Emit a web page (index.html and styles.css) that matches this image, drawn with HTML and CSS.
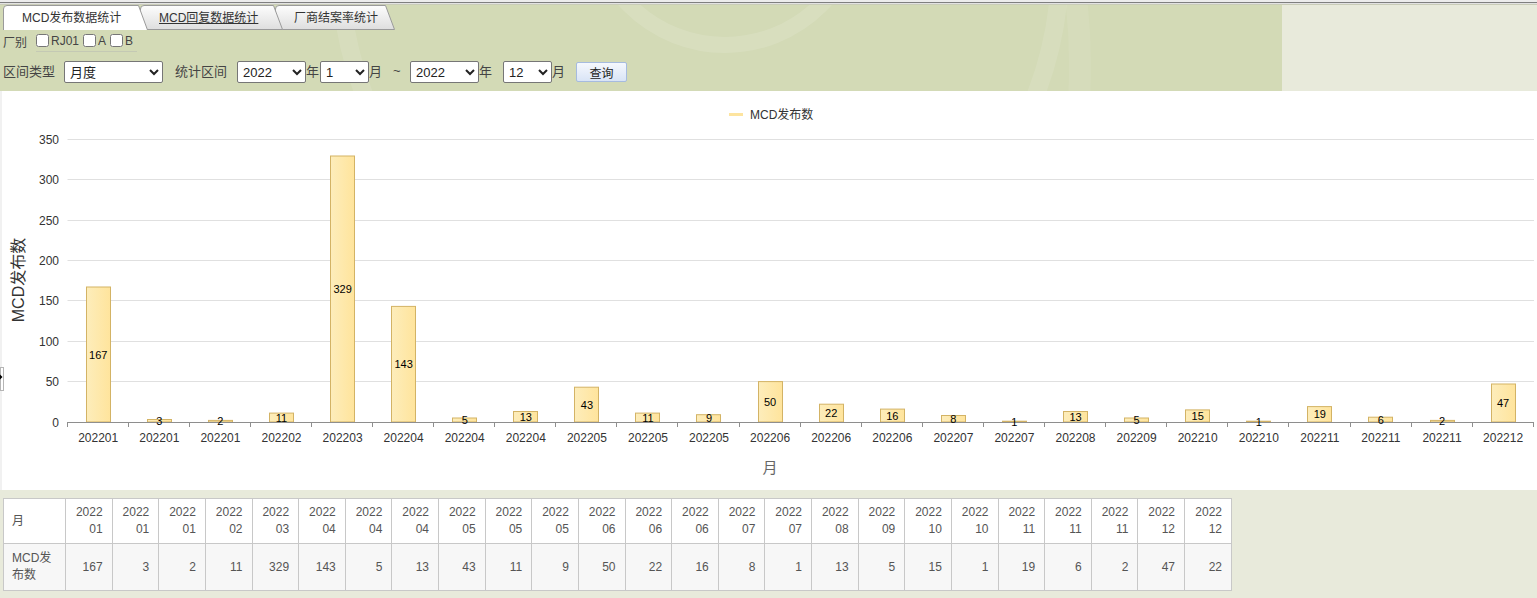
FILE: index.html
```html
<!DOCTYPE html>
<html lang="zh-CN">
<head>
<meta charset="utf-8">
<title>MCD发布数据统计</title>
<link rel="stylesheet" href="styles.css">
</head>
<body>
<div class="topbar"></div>
<div class="header">
  <svg class="deco" width="1282" height="86" viewBox="0 0 1282 86">
    <circle cx="725" cy="-95" r="135" fill="none" stroke="#ffffff" stroke-opacity="0.12" stroke-width="16"/>
    <circle cx="700" cy="-40" r="360" fill="none" stroke="#ffffff" stroke-opacity="0.1" stroke-width="18"/>
    <circle cx="520" cy="60" r="560" fill="none" stroke="#ffffff" stroke-opacity="0.07" stroke-width="22"/>
  </svg>
  <div class="tabs">
    <div class="tab tab-active">
      <svg class="tab-bg" width="145" height="25" viewBox="0 0 145 25"><path d="M0.5 25V4Q0.5 0.5 4 0.5H135.5L144.5 25" fill="#fff" stroke="#9a9a9a"/></svg>
      <span class="tab-text">MCD发布数据统计</span>
    </div>
    <div class="tab tab-2">
      <svg class="tab-bg" width="143" height="25" viewBox="0 0 143 25"><defs><linearGradient id="tg" x1="0" y1="0" x2="0" y2="1"><stop offset="0" stop-color="#fdfdfd"/><stop offset="1" stop-color="#dedede"/></linearGradient></defs><path d="M0.5 24.5V4Q0.5 0.5 4 0.5H133.5L142.5 24.5Z" fill="url(#tg)" stroke="#9a9a9a"/></svg>
      <span class="tab-text link">MCD回复数据统计</span>
    </div>
    <div class="tab tab-3">
      <svg class="tab-bg" width="120" height="25" viewBox="0 0 120 25"><path d="M0.5 24.5V4Q0.5 0.5 4 0.5H110.5L119.5 24.5Z" fill="url(#tg)" stroke="#9a9a9a"/></svg>
      <span class="tab-text">厂商结案率统计</span>
    </div>
  </div>
  <div class="row1">
    <span class="lbl-sm">厂别</span>
    <span class="checks">
      <label class="chk"><input type="checkbox">RJ01</label>
      <label class="chk"><input type="checkbox">A</label>
      <label class="chk"><input type="checkbox">B</label>
    </span>
  </div>
  <div class="row2">
    <span class="lbl">区间类型</span>
    <select class="sel sel-type"><option>月度</option></select>
    <span class="lbl lbl-range">统计区间</span>
    <select class="sel sel-year"><option>2022</option></select>
    <span class="unit">年</span>
    <select class="sel sel-mon"><option>1</option></select>
    <span class="unit">月</span>
    <span class="tilde">~</span>
    <select class="sel sel-year"><option>2022</option></select>
    <span class="unit unit-wide">年</span>
    <select class="sel sel-mon"><option>12</option></select>
    <span class="unit unit-wide">月</span>
    <button class="btn">查询</button>
  </div>
</div>

<div class="chart">
  <svg width="1537" height="399" viewBox="0 91 1537 399" font-family="'Liberation Sans','Noto Sans CJK SC',sans-serif">
    <defs>
      <linearGradient id="bar" x1="0" y1="0" x2="1" y2="0">
        <stop offset="0" stop-color="#fdedbb"/>
        <stop offset="1" stop-color="#ffe49c"/>
      </linearGradient>
    </defs>
    <rect x="0" y="91" width="2" height="399" fill="#f1f1f1"/>
    <rect x="0.5" y="367.5" width="3" height="23" fill="#fff" stroke="#b5b5b5"/>
    <path d="M0 374.5L2.5 377L0 379.5Z" fill="#000"/>

    <!-- legend -->
    <line x1="729" y1="114.5" x2="743" y2="114.5" stroke="#fde49f" stroke-width="3"/>
    <text x="750" y="118.5" font-size="12" fill="#333">MCD发布数</text>

    <!-- grid -->
    <g stroke="#e0e0e0" stroke-width="1">
      <line x1="67.5" y1="139.5" x2="1534" y2="139.5"/>
      <line x1="67.5" y1="179.5" x2="1534" y2="179.5"/>
      <line x1="67.5" y1="220.5" x2="1534" y2="220.5"/>
      <line x1="67.5" y1="260.5" x2="1534" y2="260.5"/>
      <line x1="67.5" y1="300.5" x2="1534" y2="300.5"/>
      <line x1="67.5" y1="341.5" x2="1534" y2="341.5"/>
      <line x1="67.5" y1="381.5" x2="1534" y2="381.5"/>
    </g>

    <!-- y labels -->
    <g font-size="12" fill="#333" text-anchor="end">
      <text x="59" y="143.5">350</text>
      <text x="59" y="183.5">300</text>
      <text x="59" y="224.5">250</text>
      <text x="59" y="264.5">200</text>
      <text x="59" y="304.5">150</text>
      <text x="59" y="345.5">100</text>
      <text x="59" y="385.5">50</text>
      <text x="59" y="426.5">0</text>
    </g>
    <text transform="translate(24 280) rotate(-90)" text-anchor="middle" font-size="16" fill="#333">MCD发布数</text>

    <!-- bars -->
    <g fill="url(#bar)" stroke="#d3b365" stroke-width="1">
      <rect x="86.5" y="287" width="24" height="135"/>
      <rect x="147.5" y="419.5" width="24" height="2.5"/>
      <rect x="208.5" y="420.4" width="24" height="1.6"/>
      <rect x="269.5" y="413.1" width="24" height="8.9"/>
      <rect x="330.5" y="156" width="24" height="266"/>
      <rect x="391.5" y="306.4" width="24" height="115.6"/>
      <rect x="452.5" y="418" width="24" height="4"/>
      <rect x="513.5" y="411.5" width="24" height="10.5"/>
      <rect x="574.5" y="387.2" width="24" height="34.8"/>
      <rect x="635.5" y="413.1" width="24" height="8.9"/>
      <rect x="696.5" y="414.7" width="24" height="7.3"/>
      <rect x="758.5" y="381.6" width="24" height="40.4"/>
      <rect x="819.5" y="404.2" width="24" height="17.8"/>
      <rect x="880.5" y="409.1" width="24" height="12.9"/>
      <rect x="941.5" y="415.5" width="24" height="6.5"/>
      <rect x="1002.5" y="421.2" width="24" height="0.8"/>
      <rect x="1063.5" y="411.5" width="24" height="10.5"/>
      <rect x="1124.5" y="418" width="24" height="4"/>
      <rect x="1185.5" y="409.9" width="24" height="12.1"/>
      <rect x="1246.5" y="421.2" width="24" height="0.8"/>
      <rect x="1307.5" y="406.6" width="24" height="15.4"/>
      <rect x="1368.5" y="417.2" width="24" height="4.8"/>
      <rect x="1430.5" y="420.4" width="24" height="1.6"/>
      <rect x="1491.5" y="384" width="24" height="38"/>
    </g>

    <!-- axis -->
    <line x1="67" y1="422.5" x2="1534" y2="422.5" stroke="#8e8e8e" stroke-width="1"/>
    <path stroke="#8e8e8e" stroke-width="1" d="M67.5 422v5M128.5 422v5M189.5 422v5M250.5 422v5M311.5 422v5M372.5 422v5M433.5 422v5M494.5 422v5M555.5 422v5M616.5 422v5M677.5 422v5M739.5 422v5M800.5 422v5M861.5 422v5M922.5 422v5M983.5 422v5M1044.5 422v5M1105.5 422v5M1166.5 422v5M1227.5 422v5M1288.5 422v5M1350.5 422v5M1411.5 422v5M1472.5 422v5M1533.5 422v5"/>

    <!-- bar labels -->
    <g font-size="11" fill="#000" text-anchor="middle" dominant-baseline="central">
      <text x="98.2" y="354.5">167</text>
      <text x="159.3" y="420.8">3</text>
      <text x="220.4" y="421.2">2</text>
      <text x="281.5" y="417.6">11</text>
      <text x="342.6" y="289">329</text>
      <text x="403.6" y="364.2">143</text>
      <text x="464.7" y="420">5</text>
      <text x="525.8" y="416.8">13</text>
      <text x="586.9" y="404.6">43</text>
      <text x="648" y="417.6">11</text>
      <text x="709" y="418.4">9</text>
      <text x="770.1" y="401.8">50</text>
      <text x="831.2" y="413.1">22</text>
      <text x="892.3" y="415.5">16</text>
      <text x="953.4" y="418.8">8</text>
      <text x="1014.4" y="421.6">1</text>
      <text x="1075.5" y="416.8">13</text>
      <text x="1136.6" y="420">5</text>
      <text x="1197.7" y="415.9">15</text>
      <text x="1258.8" y="421.6">1</text>
      <text x="1319.8" y="414.3">19</text>
      <text x="1380.9" y="419.6">6</text>
      <text x="1442" y="421.2">2</text>
      <text x="1503.1" y="403">47</text>
    </g>

    <!-- x labels -->
    <g font-size="12" fill="#333" text-anchor="middle">
      <text x="98.2" y="441.5">202201</text>
      <text x="159.3" y="441.5">202201</text>
      <text x="220.4" y="441.5">202201</text>
      <text x="281.5" y="441.5">202202</text>
      <text x="342.6" y="441.5">202203</text>
      <text x="403.6" y="441.5">202204</text>
      <text x="464.7" y="441.5">202204</text>
      <text x="525.8" y="441.5">202204</text>
      <text x="586.9" y="441.5">202205</text>
      <text x="648" y="441.5">202205</text>
      <text x="709" y="441.5">202205</text>
      <text x="770.1" y="441.5">202206</text>
      <text x="831.2" y="441.5">202206</text>
      <text x="892.3" y="441.5">202206</text>
      <text x="953.4" y="441.5">202207</text>
      <text x="1014.4" y="441.5">202207</text>
      <text x="1075.5" y="441.5">202208</text>
      <text x="1136.6" y="441.5">202209</text>
      <text x="1197.7" y="441.5">202210</text>
      <text x="1258.8" y="441.5">202210</text>
      <text x="1319.8" y="441.5">202211</text>
      <text x="1380.9" y="441.5">202211</text>
      <text x="1442" y="441.5">202211</text>
      <text x="1503.1" y="441.5">202212</text>
    </g>
    <text x="770" y="472.5" font-size="15" fill="#666" text-anchor="middle">月</text>
  </svg>
</div>

<div class="table-wrap">
  <table class="data">
    <colgroup>
      <col class="c-first">
      <col span="25" class="c-num">
    </colgroup>
    <tr class="hrow">
      <td class="first">月</td>
      <td>2022<br>01</td><td>2022<br>01</td><td>2022<br>01</td><td>2022<br>02</td><td>2022<br>03</td>
      <td>2022<br>04</td><td>2022<br>04</td><td>2022<br>04</td><td>2022<br>05</td><td>2022<br>05</td>
      <td>2022<br>05</td><td>2022<br>06</td><td>2022<br>06</td><td>2022<br>06</td><td>2022<br>07</td>
      <td>2022<br>07</td><td>2022<br>08</td><td>2022<br>09</td><td>2022<br>10</td><td>2022<br>10</td>
      <td>2022<br>11</td><td>2022<br>11</td><td>2022<br>11</td><td>2022<br>12</td><td>2022<br>12</td>
    </tr>
    <tr class="drow">
      <td class="first">MCD发<br>布数</td>
      <td>167</td><td>3</td><td>2</td><td>11</td><td>329</td>
      <td>143</td><td>5</td><td>13</td><td>43</td><td>11</td>
      <td>9</td><td>50</td><td>22</td><td>16</td><td>8</td>
      <td>1</td><td>13</td><td>5</td><td>15</td><td>1</td>
      <td>19</td><td>6</td><td>2</td><td>47</td><td>22</td>
    </tr>
  </table>
</div>
</body>
</html>
```

FILE: styles.css
```css
html, body {
  margin: 0;
  padding: 0;
}

body {
  width: 1537px;
  height: 598px;
  overflow: hidden;
  background: #e8eadb;
  font-family: "Liberation Sans", "Noto Sans CJK SC", sans-serif;
  color: #333;
}

.topbar {
  height: 5px;
  background: linear-gradient(#ececec 0 2px, #7f7f7f 2px 3px, #e2e2e2 3px 4px, #c9ccb8 4px 5px);
}

.header {
  position: relative;
  width: 1282px;
  height: 86px;
  background: #d3dab6;
  overflow: hidden;
}

.deco {
  position: absolute;
  left: 0;
  top: 0;
  pointer-events: none;
}

.tabs {
  position: relative;
  display: flex;
  height: 25px;
  padding-left: 3px;
}

.tab {
  position: relative;
  height: 25px;
  display: flex;
  align-items: center;
  font-size: 12px;
  line-height: 14px;
  color: #333;
}

.tab-bg {
  position: absolute;
  left: 0;
  top: 0;
}

.tab-text {
  position: relative;
  padding-left: 19px;
  white-space: nowrap;
}

.tab-active {
  width: 145px;
  z-index: 3;
}

.tab-2 {
  width: 143px;
  margin-left: -8px;
  z-index: 2;
}

.tab-3 {
  width: 120px;
  margin-left: -8px;
  z-index: 1;
}

.link {
  text-decoration: underline;
}

.row1 {
  position: relative;
  display: flex;
  align-items: center;
  height: 22px;
  padding-left: 3px;
  font-size: 12px;
  color: #444;
}

.lbl-sm {
  margin-right: 9px;
}

.checks {
  display: flex;
  align-items: center;
  height: 21px;
  border-bottom: 1px solid #c4c9b4;
}

.chk {
  display: flex;
  align-items: center;
  margin-right: 4px;
}

.chk input {
  width: 13px;
  height: 13px;
  margin: 0 2px 0 0;
  accent-color: #888;
}

.row2 {
  position: relative;
  display: flex;
  align-items: center;
  height: 22px;
  padding-top: 9px;
  padding-left: 3px;
  font-size: 13px;
  color: #444;
}

.lbl {
  margin-right: 9px;
  position: relative;
  top: -2px;
}

.lbl-range {
  margin-left: 12px;
  margin-right: 10px;
}

.sel {
  height: 22px;
  box-sizing: border-box;
  border: 1px solid #767676;
  border-radius: 2px;
  background: #fff;
  font-family: "Liberation Sans", "Noto Sans CJK SC", sans-serif;
  font-size: 13px;
  color: #222;
  padding: 0 0 0 1px;
  margin: 0;
}

.sel-type { width: 99px; }
.sel-year { width: 69px; }
.sel-mon { width: 49px; }

.unit {
  width: 14px;
  position: relative;
  top: -2px;
}

.unit-wide {
  width: 24px;
}

.tilde {
  margin-left: 10px;
  width: 17px;
  position: relative;
  top: -2px;
}

.btn {
  width: 51px;
  height: 20px;
  box-sizing: border-box;
  border: 1px solid #a6bbdf;
  border-radius: 2px;
  background: linear-gradient(#f5f8fd, #d9e4f6);
  font-family: "Liberation Sans", "Noto Sans CJK SC", sans-serif;
  font-size: 12px;
  color: #222;
  padding: 0;
  margin-left: 0;
}

.chart {
  height: 399px;
  background: #fff;
}

.chart svg {
  display: block;
}

.table-wrap {
  padding: 8px 0 0 3px;
}

.data {
  border-collapse: collapse;
  table-layout: fixed;
  width: 1229px;
  font-size: 12px;
  line-height: 17px;
  color: #555;
}

.c-first { width: 62px; }

.data td {
  border: 1px solid #c8c8c8;
  padding: 0 9px 0 6px;
  text-align: right;
  vertical-align: middle;
}

.data td.first {
  text-align: left;
  padding-left: 8px;
}

.hrow td {
  height: 44px;
  background: #fff;
}

.drow td {
  height: 46px;
  background: #f7f7f7;
}
```
